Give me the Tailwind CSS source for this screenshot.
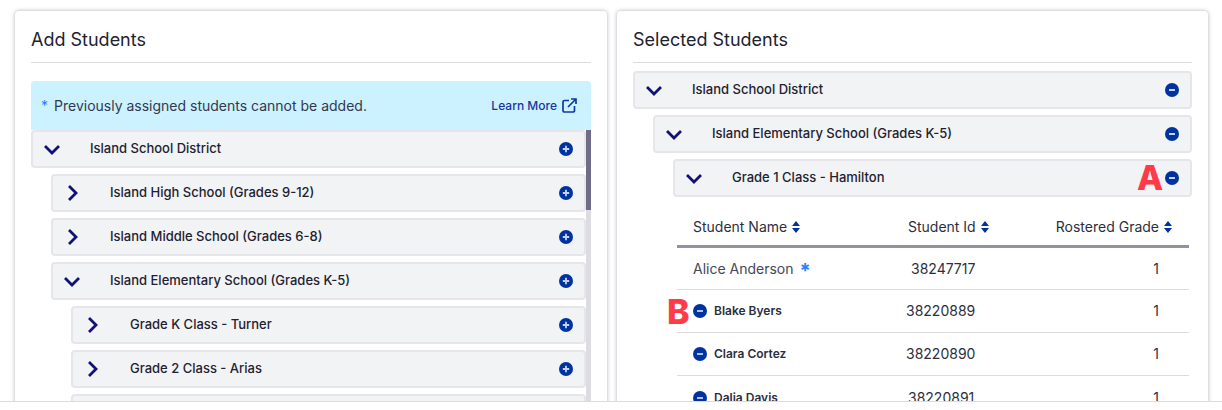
<!DOCTYPE html>
<html>
<head>
  <meta charset="UTF-8">
  <script src="https://cdn.jsdelivr.net/npm/@tailwindcss/browser@4"></script>
</head>
<body class="relative h-[410px] overflow-hidden bg-white font-['Inter',sans-serif] text-[#1e2230]">
  <div class="flex h-[410px] gap-[10px] overflow-hidden pt-[11px] pl-[15px]">

    <!-- add students -->
    <section class="h-[399px] w-[592px] overflow-hidden rounded-t-sm bg-white px-4 shadow-[0_0_4px_rgba(60,60,85,0.4)]">
      <h2 class="flex h-[52px] items-center border-b border-[#dcdbe0] pt-[6px] text-lg leading-none font-normal">Add Students</h2>
      <div class="mt-[18px] flex h-[49px] items-center justify-between rounded-t bg-[#ccf1ff] pr-[14px] pl-[10px] text-sm">
        <p class="text-[#33394d]"><span class="mr-[6px] text-[#2f80ff]">*</span>Previously assigned students cannot be added.</p>
        <a class="flex items-center gap-[5px] text-xs font-medium text-[#1a35a0]">Learn More
          <svg class="size-[15px]" viewBox="0 0 15 15" fill="none" stroke="#0b3aa8" stroke-width="1.7"><path d="M7 2.5H2.5a1.5 1.5 0 0 0-1.5 1.5v8.5A1.5 1.5 0 0 0 2.5 14H11a1.5 1.5 0 0 0 1.5-1.5V8M6 9l8-8M9 1h5v5"/></svg>
        </a>
      </div>
      <div class="flex h-[300px] overflow-hidden">
        <div class="flex w-[555px] flex-col gap-[6px]">
          <div class="flex h-[38px] shrink-0 items-center rounded border-2 border-[#e6e5ea] bg-[#f2f3f5] pr-[11px] pl-[10px] text-[13px] font-medium">
            <svg class="mr-[29px] size-[18px]" viewBox="0 0 18 18" fill="none" stroke="#11117a" stroke-width="2.8"><path d="M2 6l7 7 7-7"/></svg>
            <span class="flex-1">Island School District</span>
            <svg class="size-[14px]" viewBox="0 0 14 14"><circle cx="7" cy="7" r="7" fill="#0033a0"/><path d="M3.8 7h6.4M7 3.8v6.4" stroke="#c8d2ee" stroke-width="1.8"/></svg>
          </div>
          <div class="ml-5 flex h-[38px] shrink-0 items-center rounded border-2 border-[#e6e5ea] bg-[#f2f3f5] pr-[11px] pl-[10px] text-[13px] font-medium">
            <svg class="mr-[29px] size-[18px]" viewBox="0 0 18 18" fill="none" stroke="#11117a" stroke-width="2.8"><path d="M6 2l7 7-7 7"/></svg>
            <span class="flex-1">Island High School (Grades 9-12)</span>
            <svg class="size-[14px]" viewBox="0 0 14 14"><circle cx="7" cy="7" r="7" fill="#0033a0"/><path d="M3.8 7h6.4M7 3.8v6.4" stroke="#c8d2ee" stroke-width="1.8"/></svg>
          </div>
          <div class="ml-5 flex h-[38px] shrink-0 items-center rounded border-2 border-[#e6e5ea] bg-[#f2f3f5] pr-[11px] pl-[10px] text-[13px] font-medium">
            <svg class="mr-[29px] size-[18px]" viewBox="0 0 18 18" fill="none" stroke="#11117a" stroke-width="2.8"><path d="M6 2l7 7-7 7"/></svg>
            <span class="flex-1">Island Middle School (Grades 6-8)</span>
            <svg class="size-[14px]" viewBox="0 0 14 14"><circle cx="7" cy="7" r="7" fill="#0033a0"/><path d="M3.8 7h6.4M7 3.8v6.4" stroke="#c8d2ee" stroke-width="1.8"/></svg>
          </div>
          <div class="ml-5 flex h-[38px] shrink-0 items-center rounded border-2 border-[#e6e5ea] bg-[#f2f3f5] pr-[11px] pl-[10px] text-[13px] font-medium">
            <svg class="mr-[29px] size-[18px]" viewBox="0 0 18 18" fill="none" stroke="#11117a" stroke-width="2.8"><path d="M2 6l7 7 7-7"/></svg>
            <span class="flex-1">Island Elementary School (Grades K-5)</span>
            <svg class="size-[14px]" viewBox="0 0 14 14"><circle cx="7" cy="7" r="7" fill="#0033a0"/><path d="M3.8 7h6.4M7 3.8v6.4" stroke="#c8d2ee" stroke-width="1.8"/></svg>
          </div>
          <div class="ml-10 flex h-[38px] shrink-0 items-center rounded border-2 border-[#e6e5ea] bg-[#f2f3f5] pr-[11px] pl-[10px] text-[13px] font-medium">
            <svg class="mr-[29px] size-[18px]" viewBox="0 0 18 18" fill="none" stroke="#11117a" stroke-width="2.8"><path d="M6 2l7 7-7 7"/></svg>
            <span class="flex-1">Grade K Class - Turner</span>
            <svg class="size-[14px]" viewBox="0 0 14 14"><circle cx="7" cy="7" r="7" fill="#0033a0"/><path d="M3.8 7h6.4M7 3.8v6.4" stroke="#c8d2ee" stroke-width="1.8"/></svg>
          </div>
          <div class="ml-10 flex h-[38px] shrink-0 items-center rounded border-2 border-[#e6e5ea] bg-[#f2f3f5] pr-[11px] pl-[10px] text-[13px] font-medium">
            <svg class="mr-[29px] size-[18px]" viewBox="0 0 18 18" fill="none" stroke="#11117a" stroke-width="2.8"><path d="M6 2l7 7-7 7"/></svg>
            <span class="flex-1">Grade 2 Class - Arias</span>
            <svg class="size-[14px]" viewBox="0 0 14 14"><circle cx="7" cy="7" r="7" fill="#0033a0"/><path d="M3.8 7h6.4M7 3.8v6.4" stroke="#c8d2ee" stroke-width="1.8"/></svg>
          </div>
          <div class="ml-10 h-[38px] shrink-0 rounded border-2 border-[#e6e5ea] bg-[#f2f3f5]"></div>
        </div>
        <!-- scrollbar -->
        <div class="w-[5px] bg-[#dddce2]"><div class="h-[80px] bg-[#6e6c88]"></div></div>
      </div>
    </section>

    <!-- selected students -->
    <section class="h-[399px] w-[591px] overflow-hidden rounded-t-sm bg-white px-4 shadow-[0_0_4px_rgba(60,60,85,0.4)]">
      <h2 class="flex h-[52px] items-center border-b border-[#dcdbe0] pt-[6px] text-lg leading-none font-normal">Selected Students</h2>
      <div class="mt-2 flex flex-col gap-[6px]">
        <div class="flex h-[38px] items-center rounded border-2 border-[#e6e5ea] bg-[#f2f3f5] pr-[11px] pl-[10px] text-[13px] font-medium">
          <svg class="mr-[29px] size-[18px]" viewBox="0 0 18 18" fill="none" stroke="#11117a" stroke-width="2.8"><path d="M2 6l7 7 7-7"/></svg>
          <span class="flex-1">Island School District</span>
          <svg class="size-[14px]" viewBox="0 0 14 14"><circle cx="7" cy="7" r="7" fill="#0033a0"/><path d="M4 7h6" stroke="#c8d2ee" stroke-width="1.8"/></svg>
        </div>
        <div class="ml-5 flex h-[38px] items-center rounded border-2 border-[#e6e5ea] bg-[#f2f3f5] pr-[11px] pl-[10px] text-[13px] font-medium">
          <svg class="mr-[29px] size-[18px]" viewBox="0 0 18 18" fill="none" stroke="#11117a" stroke-width="2.8"><path d="M2 6l7 7 7-7"/></svg>
          <span class="flex-1">Island Elementary School (Grades K-5)</span>
          <svg class="size-[14px]" viewBox="0 0 14 14"><circle cx="7" cy="7" r="7" fill="#0033a0"/><path d="M4 7h6" stroke="#c8d2ee" stroke-width="1.8"/></svg>
        </div>
        <div class="ml-10 flex h-[38px] items-center rounded border-2 border-[#e6e5ea] bg-[#f2f3f5] pr-[11px] pl-[10px] text-[13px] font-medium">
          <svg class="mr-[29px] size-[18px]" viewBox="0 0 18 18" fill="none" stroke="#11117a" stroke-width="2.8"><path d="M2 6l7 7 7-7"/></svg>
          <span class="flex-1">Grade 1 Class - Hamilton</span>
          <svg class="size-[14px]" viewBox="0 0 14 14"><circle cx="7" cy="7" r="7" fill="#0033a0"/><path d="M4 7h6" stroke="#c8d2ee" stroke-width="1.8"/></svg>
        </div>
      </div>

      <!-- student table -->
      <div class="mt-[13px] ml-11 w-[512px] text-sm">
        <div class="grid h-[38px] grid-cols-[214px_136px_162px] items-center border-b-[3px] border-[#9390a5] pb-[2px] text-[#2b2f3d]">
          <div class="flex items-center gap-[5px] pl-4">Student Name
            <svg class="h-[12px] w-2" viewBox="0 0 8 12" fill="#0033a0"><path d="M4 0l4 5H0zM4 12l4-5H0z"/></svg>
          </div>
          <div class="flex items-center gap-[5px] pl-[17px]">Student Id
            <svg class="h-[12px] w-2" viewBox="0 0 8 12" fill="#0033a0"><path d="M4 0l4 5H0zM4 12l4-5H0z"/></svg>
          </div>
          <div class="flex items-center justify-end gap-[5px] pr-[17px]">Rostered Grade
            <svg class="h-[12px] w-2" viewBox="0 0 8 12" fill="#0033a0"><path d="M4 0l4 5H0zM4 12l4-5H0z"/></svg>
          </div>
        </div>
        <div class="grid h-[42px] grid-cols-[214px_136px_162px] items-center border-b border-[#dcdbe0] text-[#44485a]">
          <div class="flex items-center pl-4">Alice Anderson<span class="mt-[4px] ml-[6px] text-xl leading-none font-bold text-[#2f80ff]">*</span></div>
          <div class="pl-5 text-[#2b2f3d]">38247717</div>
          <div class="pr-[30px] text-right text-[#2b2f3d]">1</div>
        </div>
        <div class="grid h-[43px] grid-cols-[214px_136px_162px] items-center border-b border-[#dcdbe0] text-[#2b2f3d]">
          <div class="flex items-center gap-[7px] pl-4 text-xs font-semibold">
            <svg class="size-[14px]" viewBox="0 0 14 14"><circle cx="7" cy="7" r="7" fill="#0033a0"/><path d="M4 7h6" stroke="#c8d2ee" stroke-width="1.8"/></svg>Blake Byers</div>
          <div class="pl-[15px]">38220889</div>
          <div class="pr-[30px] text-right">1</div>
        </div>
        <div class="grid h-[43px] grid-cols-[214px_136px_162px] items-center border-b border-[#dcdbe0] text-[#2b2f3d]">
          <div class="flex items-center gap-[7px] pl-4 text-xs font-semibold">
            <svg class="size-[14px]" viewBox="0 0 14 14"><circle cx="7" cy="7" r="7" fill="#0033a0"/><path d="M4 7h6" stroke="#c8d2ee" stroke-width="1.8"/></svg>Clara Cortez</div>
          <div class="pl-[15px]">38220890</div>
          <div class="pr-[30px] text-right">1</div>
        </div>
        <div class="grid h-[43px] grid-cols-[214px_136px_162px] items-center text-[#2b2f3d]">
          <div class="flex items-center gap-[7px] pl-4 text-xs font-semibold">
            <svg class="size-[14px]" viewBox="0 0 14 14"><circle cx="7" cy="7" r="7" fill="#0033a0"/><path d="M4 7h6" stroke="#c8d2ee" stroke-width="1.8"/></svg>Dalia Davis</div>
          <div class="pl-[17px]">38220891</div>
          <div class="pr-[30px] text-right">1</div>
        </div>
      </div>
    </section>
  </div>

  <!-- annotation letters over the screenshot -->
  <span class="absolute top-[156px] left-[1137px] text-[34px] leading-[44px] font-extrabold text-[#ff3b4a]">A</span>
  <span class="absolute top-[290px] left-[667px] text-[34px] leading-[44px] font-extrabold text-[#ff3b4a]">B</span>

  <!-- page footer edge -->
  <div class="absolute inset-x-0 bottom-0 h-[9px] border-t border-[#dcdbe0] bg-white"></div>
</body>
</html>
